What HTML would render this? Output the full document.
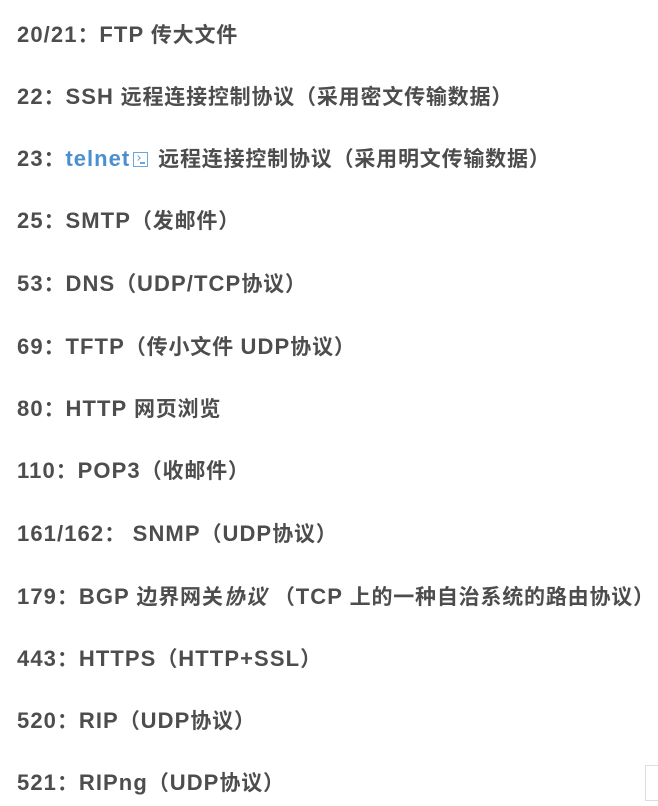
<!DOCTYPE html>
<html><head><meta charset="utf-8"><style>
html,body{margin:0;padding:0;background:#fff;width:658px;height:806px;overflow:hidden}
body{font-family:"Liberation Sans","Noto Sans CJK SC",sans-serif;font-weight:bold;font-size:21px;color:#4d4d4d;letter-spacing:0.8px}
p{position:absolute;left:17px;margin:0;white-space:nowrap;line-height:24px}
b{font-size:22px;letter-spacing:1.1px}
a{color:#4a90d0;text-decoration:none;font-size:22px;letter-spacing:1px}
.ic{display:inline-block;width:15px;height:15px;border:1px solid #6aa8dc;box-sizing:border-box;vertical-align:-1px;margin:0 10px 0 3px;position:relative}
.ic:before{content:"";position:absolute;left:2px;top:3px;width:3px;height:3px;border-right:1.5px solid #6aa8dc;border-bottom:1.5px solid #6aa8dc;transform:rotate(-45deg)}
.ic:after{content:"";position:absolute;left:6px;top:9px;width:5px;height:1.5px;background:#6aa8dc}
.box{position:absolute;left:645px;top:765px;width:14px;height:36px;border:1px solid #ddd;border-right:none;box-sizing:border-box}
</style></head><body>
<p style="top:23px"><b>20/21</b>：<b>FTP</b> 传大文件</p>
<p style="top:85px"><b>22</b>：<b>SSH</b> 远程连接控制协议（采用密文传输数据）</p>
<p style="top:147px"><b>23</b>：<a>telnet</a><span class="ic"></span>远程连接控制协议（采用明文传输数据）</p>
<p style="top:209px"><b>25</b>：<b>SMTP</b>（发邮件）</p>
<p style="top:272px"><b>53</b>：<b>DNS</b>（<b>UDP/TCP</b>协议）</p>
<p style="top:335px"><b>69</b>：<b>TFTP</b>（传小文件 <b>UDP</b>协议）</p>
<p style="top:397px"><b>80</b>：<b>HTTP</b> 网页浏览</p>
<p style="top:459px"><b>110</b>：<b>POP3</b>（收邮件）</p>
<p style="top:522px"><b>161/162</b>： <b>SNMP</b>（<b>UDP</b>协议）</p>
<p style="top:585px"><b>179</b>：<b>BGP</b> 边界网关<i>协议</i> （<b>TCP</b> 上的一种自治系统的路由协议）</p>
<p style="top:647px"><b>443</b>：<b>HTTPS</b>（<b>HTTP+SSL</b>）</p>
<p style="top:709px"><b>520</b>：<b>RIP</b>（<b>UDP</b>协议）</p>
<p style="top:771px"><b>521</b>：<b>RIPng</b>（<b>UDP</b>协议）</p>
<div class="box"></div>
</body></html>
